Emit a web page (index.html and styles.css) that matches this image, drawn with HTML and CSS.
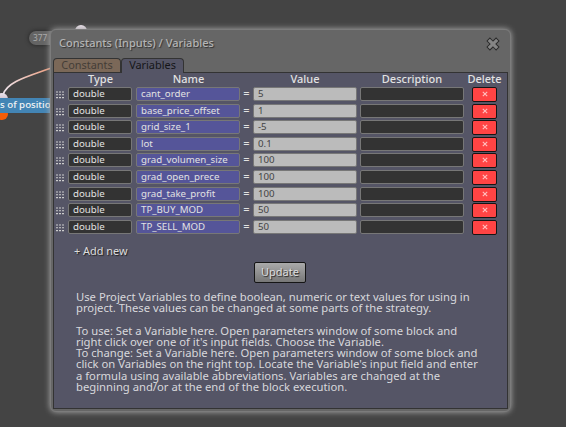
FILE: index.html
```
<!DOCTYPE html>
<html lang="en">
<head>
<meta charset="utf-8">
<title>Constants (Inputs) / Variables</title>
<link rel="stylesheet" href="styles.css">
</head>
<body>
<div class="canvas">
  <div class="node-id">377</div>
  <svg class="wires" width="90" height="130" viewBox="0 0 90 130">
    <defs>
      <linearGradient id="wire" x1="0" x2="1"><stop offset="0" stop-color="#eee4ec"/><stop offset="1" stop-color="#ed9876"/></linearGradient>
      <linearGradient id="port" x1="0" x2="0" y1="0" y2="1"><stop offset="0" stop-color="#eee5ee"/><stop offset="1" stop-color="#b5a5b5"/></linearGradient>
    </defs>
    <circle cx="81" cy="31" r="6" fill="url(#port)"/>
    <path d="M3 95C7 81 30 76 54 67" fill="none" stroke="url(#wire)" stroke-width="1.7"/>
    <circle cx="2" cy="99" r="6" fill="url(#port)"/>
    <circle cx="2" cy="114" r="6" fill="#f45d08"/>
  </svg>
  <div class="node-title">s of position</div>
</div>
<div class="modal">
  <header class="modal-head">
    <h1>Constants (Inputs) / Variables</h1>
    <svg class="close" width="14" height="14" viewBox="0 0 14 14"><path d="M3.9 3.9L10.1 10.1M10.1 3.9L3.9 10.1" stroke="#292929" stroke-width="5" stroke-linecap="square"/><path d="M3.9 3.9L10.1 10.1M10.1 3.9L3.9 10.1" stroke="#858585" stroke-width="3.2" stroke-linecap="square"/></svg>
  </header>
  <nav class="tabs"><span class="tab constants">Constants</span><span class="tab active">Variables</span></nav>
  <main class="panel">
    <div class="labels"><span></span><b>Type</b><b>Name</b><span></span><b>Value</b><b>Description</b><b>Delete</b></div>
    <div class="rows" id="rows"></div>
    <div class="add">+ Add new</div>
    <button class="update">Update</button>
    <div class="help">
      <p>Use Project Variables to define boolean, numeric or text values for using in<br>project. These values can be changed at some parts of the strategy.</p>
      <p>To use: Set a Variable here. Open parameters window of some block and<br>right click over one of it's input fields. Choose the Variable.<br>To change: Set a Variable here. Open parameters window of some block and<br>click on Variables on the right top. Locate the Variable's input field and enter<br>a formula using available abbreviations. Variables are changed at the<br>beginning and/or at the end of the block execution.</p>
    </div>
  </main>
</div>
<script src="script.js"></script>
</body>
</html>
```
FILE: styles.css
```
* { box-sizing: border-box; }
body { margin: 0; width: 566px; height: 427px; overflow: hidden; background: #444; font-family: "Noto Sans", sans-serif; }
.canvas { position: absolute; inset: 0; }
.wires { position: absolute; left: 0; top: 0; }
.node-id { position: absolute; left: 29px; top: 31px; width: 50px; height: 14px; border-radius: 7px; background: #646464; color: #aaa; font-size: 8.3px; line-height: 13px; padding-left: 4px; box-shadow: 0 0 4px #222; }
.node-title { position: absolute; left: 0; top: 98px; width: 80px; height: 15px; background: #4385b5; color: #f4f4f4; font-size: 9.7px; font-weight: 500; line-height: 13px; white-space: nowrap; }
.modal { position: absolute; left: 50px; top: 29px; width: 461px; height: 383px; padding: 0 4px 4px 3px; border: 1px solid #7c7c7c; border-radius: 6px; background: #666; box-shadow: 0 0 6px #aaa; }
.modal-head { display: flex; justify-content: space-between; height: 28px; padding: 5px 6px 0 5px; }
h1 { margin: 0; font-size: 11px; font-weight: 500; line-height: 15px; color: #b4b4b4; text-shadow: 1px 1px 1px #333; white-space: nowrap; }
.close { display: block; margin-top: 2px; }
.tabs { display: flex; height: 14px; margin-left: -1px; position: relative; }
.tab { height: 14px; border: 1px solid #333; border-bottom: 0; border-radius: 4px 4px 0 0; font-size: 10.9px; line-height: 12px; text-align: center; background: #555566; color: #151518; }
.constants { width: 68px; background: #7b6858; color: #443d37; }
.active { width: 63px; height: 15px; z-index: 1; }
.panel { width: 455px; height: 337px; margin-left: -1px; border: 1px solid #333; background: #555566; color: #e2e2e2; }
.labels { display: grid; grid-template-columns: 14px 65px 111px 6px 110px 104px 41px; align-items: center; height: 14px; font-size: 11px; line-height: 12px; text-align: center; }
.labels b { position: relative; top: -1px; font-weight: 500; white-space: nowrap; }
.rows { display: flex; flex-direction: column; }
.row { display: flex; height: 16.6px; font-size: 9.7px; line-height: 12px; }
.grip { width: 14px; padding: 4px 0 0 2px; }
.grip svg { display: block; }
.cell { height: 14px; border: 1px solid #777; border-radius: 2px; padding-left: 4px; white-space: nowrap; background: #333; color: #e2e2e2; }
.type { width: 64px; font-size: 9.7px; }
.name { width: 104px; margin-left: 4px; background: #555599; }
.eq { width: 13px; text-align: center; font-size: 11px; line-height: 12px; }
.value { width: 104px; background: #bbb; color: #444; font-size: 9.7px; }
.desc { width: 104px; margin-left: 3px; }
.del { width: 25px; height: 15px; margin-left: 8px; border: 1px solid #151515; border-radius: 2px; background: #ff4444; display: flex; justify-content: center; align-items: center; padding-bottom: 1px; }
.add { margin: 7.6px 0 0 20px; font-size: 10.9px; line-height: 14px; color: #ddd; text-shadow: 1px 1px 1px #222; }
.update { display: block; width: 52px; height: 21px; margin: 4px 0 0 200px; padding: 0; border: 1px solid #151515; border-radius: 2px; background: linear-gradient(#aaa, #777); color: #ddd; font: 11px/18px "Noto Sans", sans-serif; text-shadow: 1px 1px 1px #222; }
.help { margin: 8.2px 0 0 22px; font-size: 11.25px; line-height: 11.2px; white-space: nowrap; color: #d8d8dc; }
.help p { margin: 0 0 11.2px; }
```
FILE: script.js
```
const variables = [["cant_order", "5"], ["base_price_offset", "1"], ["grid_size_1", "-5"], ["lot", "0.1"], ["grad_volumen_size", "100"], ["grad_open_prece", "100"], ["grad_take_profit", "100"], ["TP_BUY_MOD", "50"], ["TP_SELL_MOD", "50"]];
const grip = '<svg width="9" height="8" viewBox="0 0 9 8"><path d="M0 1H9M0 3.8H9M0 6.6H9" stroke="#ccc" stroke-width="1.1" stroke-dasharray="2 1"/></svg>';
const cross = '<svg width="6" height="6" viewBox="0 0 6 6"><path d="M.8 .8L5.2 5.2M5.2 .8L.8 5.2" stroke="#ffc0c0" stroke-width="1.1"/></svg>';
document.getElementById("rows").innerHTML = variables.map(([name, value]) =>
  `<div class="row"><span class="grip">${grip}</span><span class="cell type">double</span><span class="cell name">${name}</span><span class="eq">=</span><span class="cell value">${value}</span><span class="cell desc"></span><span class="del">${cross}</span></div>`).join("");
```
